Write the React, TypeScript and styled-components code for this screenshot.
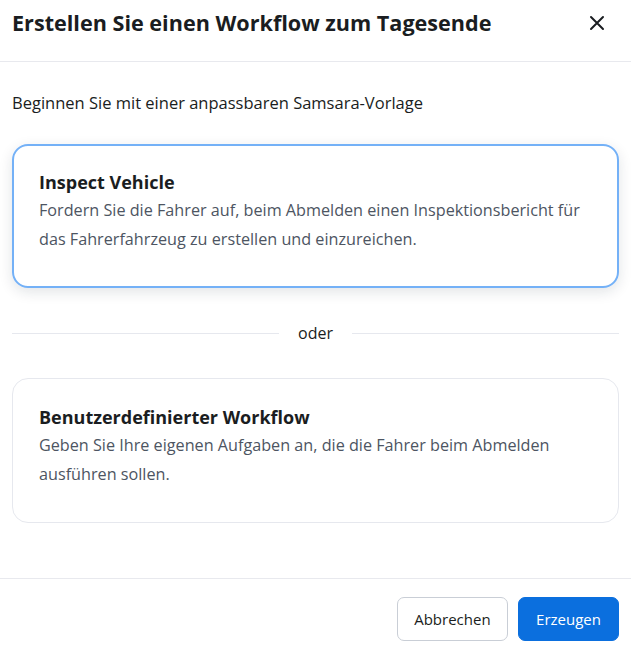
import React from 'react';
import styled, { createGlobalStyle } from 'styled-components';

const GlobalStyle = createGlobalStyle`
  html, body {
    margin: 0;
    padding: 0;
    background: #ffffff;
  }
  body {
    font-family: "Open Sans", "Noto Sans", "Liberation Sans", sans-serif;
    color: #1a1d21;
  }
`;

const Dialog = styled.div`
  width: 631px;
  height: 652px;
  display: flex;
  flex-direction: column;
  background: #ffffff;
`;

const Header = styled.div`
  height: 62px;
  box-sizing: border-box;
  padding: 0 22px 16px 12px;
  display: flex;
  align-items: center;
  justify-content: space-between;
  border-bottom: 1px solid #e8e9ee;
`;

const Title = styled.h1`
  margin: 0;
  font-size: 21.6px;
  font-weight: 700;
  color: #1a1d21;
`;

const CloseButton = styled.button`
  border: 0;
  background: none;
  padding: 0;
  width: 24px;
  height: 24px;
  display: flex;
  align-items: center;
  justify-content: center;
  cursor: pointer;
  color: #1a1d21;
`;

const Body = styled.div`
  flex: 1;
  padding: 29px 12px 0;
  display: flex;
  flex-direction: column;
`;

const Intro = styled.p`
  margin: 0 0 29px;
  font-size: 16.5px;
  line-height: 24px;
  color: #1a1d21;
`;

const Card = styled.div<{ $selected?: boolean }>`
  box-sizing: border-box;
  border-radius: 16px;
  border: ${(p) => (p.$selected ? '2px solid #74b1f7' : '1px solid #e6e8ee')};
  padding: ${(p) => (p.$selected ? '24px 25px 32px' : '26px 26px 33px')};
  box-shadow: ${(p) => (p.$selected ? '0 4px 14px rgba(20, 30, 50, 0.12)' : 'none')};
  cursor: pointer;
`;

const CardTitle = styled.div`
  font-size: 18px;
  font-weight: 700;
  line-height: 24px;
  color: #1a1d21;
`;

const CardText = styled.div`
  margin-top: 2px;
  font-size: 16.2px;
  line-height: 29px;
  color: #4d5562;
`;

const Divider = styled.div`
  display: flex;
  align-items: center;
  gap: 19px;
  margin: 34px 0 34px;
  font-size: 16px;
  line-height: 22px;
  color: #1a1d21;

  &::before,
  &::after {
    content: '';
    flex: 1;
    height: 1px;
    background: #e6e8ee;
  }
`;

const Footer = styled.div`
  height: 74px;
  box-sizing: border-box;
  border-top: 1px solid #e8e9ee;
  padding: 18px 12px 0;
  display: flex;
  justify-content: flex-end;
  align-items: flex-start;
  gap: 10px;
`;

const Button = styled.button<{ $primary?: boolean }>`
  height: 44px;
  padding: 0 ${(p) => (p.$primary ? '17px' : '16.5px')};
  border-radius: 7px;
  font-family: inherit;
  font-size: 15px;
  cursor: pointer;
  border: 1px solid ${(p) => (p.$primary ? '#0b6fde' : '#c9ced6')};
  background: ${(p) => (p.$primary ? '#0b6fde' : '#ffffff')};
  color: ${(p) => (p.$primary ? '#ffffff' : '#1a1d21')};
`;

const templates = [
  {
    title: 'Inspect Vehicle',
    text: 'Fordern Sie die Fahrer auf, beim Abmelden einen Inspektionsbericht für das Fahrerfahrzeug zu erstellen und einzureichen.',
  },
  {
    title: 'Benutzerdefinierter Workflow',
    text: 'Geben Sie Ihre eigenen Aufgaben an, die die Fahrer beim Abmelden ausführen sollen.',
  },
];

const App = () => {
  return (
    <>
      <GlobalStyle />
      <Dialog>
        <Header>
          <Title>Erstellen Sie einen Workflow zum Tagesende</Title>
          <CloseButton aria-label="Schließen">
            <svg width="16" height="16" viewBox="0 0 16 16" fill="none">
              <path d="M2 2L14 14M14 2L2 14" stroke="currentColor" strokeWidth="2" strokeLinecap="round" />
            </svg>
          </CloseButton>
        </Header>
        <Body>
          <Intro>Beginnen Sie mit einer anpassbaren Samsara-Vorlage</Intro>
          <Card $selected>
            <CardTitle>{templates[0].title}</CardTitle>
            <CardText>{templates[0].text}</CardText>
          </Card>
          <Divider>oder</Divider>
          <Card>
            <CardTitle>{templates[1].title}</CardTitle>
            <CardText>{templates[1].text}</CardText>
          </Card>
        </Body>
        <Footer>
          <Button>Abbrechen</Button>
          <Button $primary>Erzeugen</Button>
        </Footer>
      </Dialog>
    </>
  );
};

export default App;
